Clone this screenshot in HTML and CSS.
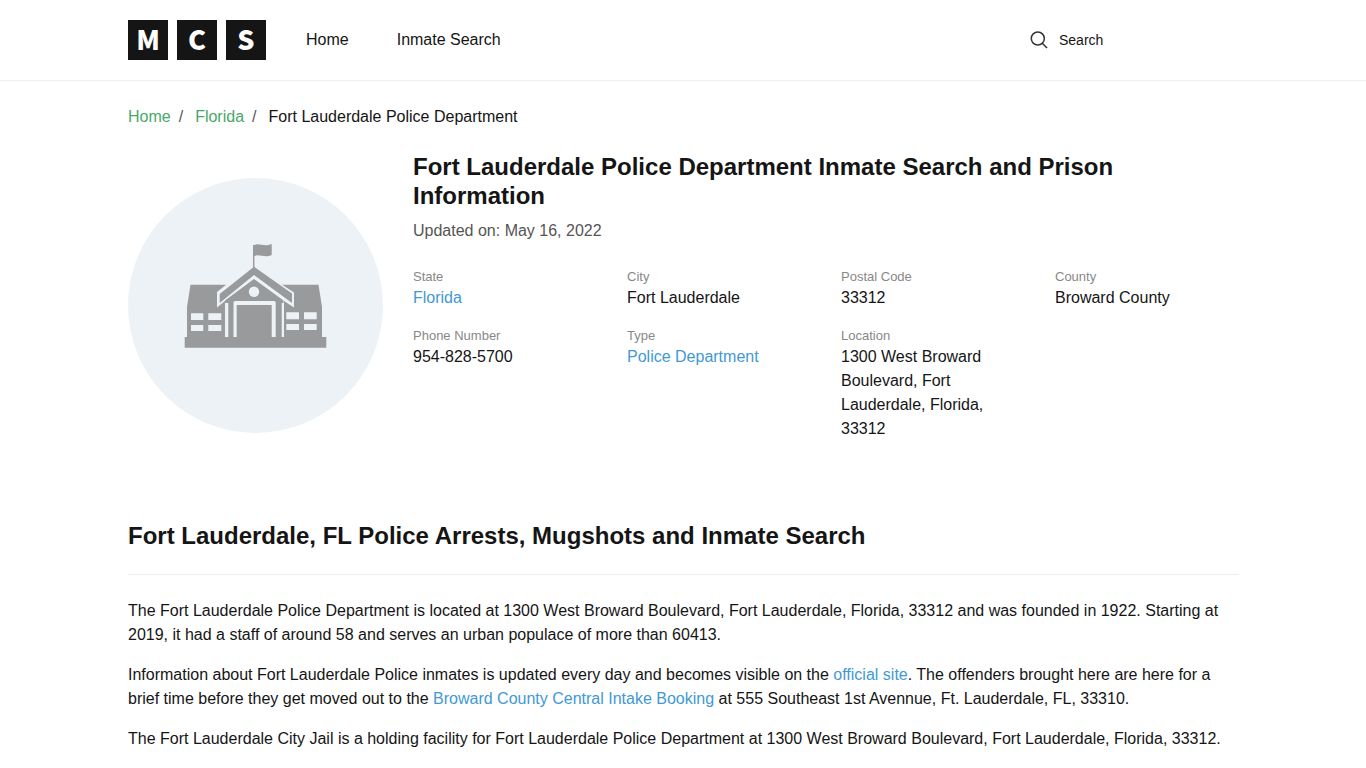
FILE: index.html
```html
<!DOCTYPE html>
<html lang="en">
<head>
<meta charset="utf-8">
<meta name="viewport" content="width=device-width, initial-scale=1">
<title>Fort Lauderdale Police Department Inmate Search and Prison Information</title>
<link rel="stylesheet" href="styles.css">
</head>
<body>
<header class="site-header">
  <a class="logo" href="#" aria-label="MCS home"><span>M</span><span>C</span><span>S</span></a>
  <nav class="nav" aria-label="Main">
    <a href="#">Home</a>
    <a href="#">Inmate Search</a>
  </nav>
  <form class="search" role="search">
    <label for="search-input" aria-label="Search">
      <svg width="18" height="18" viewBox="0 0 18 18" fill="none" stroke="#333" stroke-width="1.500" aria-hidden="true"><circle cx="7.800" cy="7.500" r="6.500"/><path d="M12.300 12.200 17 17"/></svg>
    </label>
    <input id="search-input" type="text" placeholder="Search">
  </form>
</header>
<main class="page">
  <nav class="breadcrumb" aria-label="Breadcrumb">
    <ol>
      <li><a href="#">Home</a></li>
      <li><a href="#">Florida</a></li>
      <li>Fort Lauderdale Police Department</li>
    </ol>
  </nav>
  <section class="facility">
    <div class="facility-image">
      <svg viewBox="0 0 255 255" role="img" aria-label="Facility building">
        <circle cx="127.500" cy="127.500" r="127.500" fill="#edf2f6"/>
        <g transform="translate(42 52)" fill="#989a9c">
          <path d="M20.500 54.700H148.500L152 77V107H156.300V117.800H14.700V107H17V77Z"/>
          <path d="M47 62 57 54H111L124 62.500V77.500L114 71V107H55V71L47 77.500Z" fill="#edf2f6"/>
          <path d="M83 15h1.200c5-2.500 10 2.500 17.500-1v11c-7 3.500-12-1.500-17.300 1v12H83Z"/>
          <path d="M84 36.700 122 63.500V73L84 45 49.700 73V64Z"/>
          <path d="M84 49 113.500 70.500V73H111.700V107H105.700V72.500Q105.700 71 104.200 71H65Q63.500 71 63.500 72.500V107H58.300V73H55V70.500Z"/>
          <path d="M66.700 75H101.700V107H66.700Z"/>
          <circle cx="84" cy="61.700" r="5.200" fill="#edf2f6"/>
          <path fill="#edf2f6" d="M21 83.300h12.300v6.700H21Zm17.300 0h13v6.700h-13ZM21 95h12.300v6H21Zm17.300 0h13v6h-13ZM116.300 82.300H129v7h-12.700Zm17.700 0h12.700v7H134ZM116.300 94H129v6h-12.700Zm17.700 0h12.700v6H134Z"/>
        </g>
      </svg>
    </div>
    <div class="facility-info">
      <h1>Fort Lauderdale Police Department Inmate Search and Prison Information</h1>
      <p class="updated">Updated on: May 16, 2022</p>
      <dl class="details">
        <div><dt>State</dt><dd><a href="#">Florida</a></dd></div>
        <div><dt>City</dt><dd>Fort Lauderdale</dd></div>
        <div><dt>Postal Code</dt><dd>33312</dd></div>
        <div><dt>County</dt><dd>Broward County</dd></div>
        <div><dt>Phone Number</dt><dd>954-828-5700</dd></div>
        <div><dt>Type</dt><dd><a href="#">Police Department</a></dd></div>
        <div><dt>Location</dt><dd>1300 West Broward Boulevard, Fort Lauderdale, Florida, 33312</dd></div>
      </dl>
    </div>
  </section>
  <article class="article">
    <h2>Fort Lauderdale, FL Police Arrests, Mugshots and Inmate Search</h2>
    <p>The Fort Lauderdale Police Department is located at 1300 West Broward Boulevard, Fort Lauderdale, Florida, 33312 and was founded in 1922. Starting at 2019, it had a staff of around 58 and serves an urban populace of more than 60413.</p>
    <p>Information about Fort Lauderdale Police inmates is updated every day and becomes visible on the <a href="#">official site</a>. The offenders brought here are here for a brief time before they get moved out to the <a href="#">Broward County Central Intake Booking</a> at 555 Southeast 1st Avennue, Ft. Lauderdale, FL, 33310.</p>
    <p>The Fort Lauderdale City Jail is a holding facility for Fort Lauderdale Police Department at 1300 West Broward Boulevard, Fort Lauderdale, Florida, 33312.</p>
  </article>
</main>
</body>
</html>
```

FILE: styles.css
```css
* { box-sizing: border-box; }

body {
  margin: 0;
  background: #fff;
  color: #151515;
  font: 16px/24px "Liberation Sans", Arial, sans-serif;
}

a { color: #4299d4; text-decoration: none; }
h1, h2, p, dl, dd, ol { margin: 0; }

.site-header {
  display: flex;
  align-items: center;
  padding: 20px 127px 20px 128px;
  border-bottom: 1px solid #eee;
}

.logo { display: flex; gap: 9px; }

.logo span {
  width: 40px;
  height: 40px;
  background: #151515;
  color: #fff;
  font: 900 27px/38px "Noto Sans CJK JP", "Noto Sans", sans-serif;
  text-align: center;
}

.nav { display: flex; gap: 48px; margin-left: 40px; }
.nav a { color: #151515; }

.search {
  display: flex;
  align-items: center;
  gap: 11px;
  margin-left: auto;
}

.search label { display: flex; }

.search input {
  width: 180px;
  padding: 0;
  border: 0;
  outline: 0;
  background: none;
  color: #151515;
  font: 14px/24px "Liberation Sans", Arial, sans-serif;
}

.search input::placeholder { color: #151515; opacity: 1; }

.page { padding: 24px 127px 24px 128px; }

.breadcrumb ol {
  display: flex;
  padding: 0;
  list-style: none;
}

.breadcrumb a { color: #48a868; }

.breadcrumb li:not(:last-child)::after {
  content: "/";
  padding: 0 12px 0 8px;
  color: #555;
}

.facility {
  display: flex;
  align-items: center;
  gap: 30px;
  margin-top: 23px;
}

.facility-image { flex: 0 0 255px; }
.facility-image svg { display: block; width: 100%; }
.facility-info { flex: 1; padding-bottom: 18px; }

h1, h2 { font-size: 24px; line-height: 29px; }

.updated { margin-top: 9px; color: #555; }

.details {
  display: grid;
  grid-template-columns: repeat(4, 1fr);
  gap: 16px 30px;
  margin-top: 24px;
}

.details dt { color: #888; font-size: 13px; line-height: 19px; }

.article { margin-top: 62px; }

.article h2 {
  margin-bottom: 24px;
  padding-bottom: 24px;
  border-bottom: 1px solid #eee;
}

.article p { margin-bottom: 16px; }
```
